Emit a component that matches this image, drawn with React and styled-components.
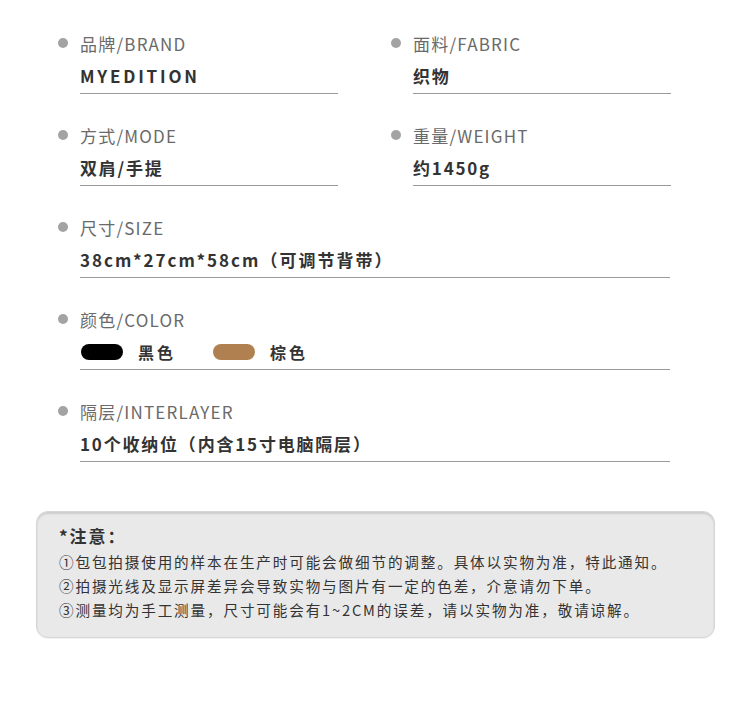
import React from 'react'
import styled, { createGlobalStyle } from 'styled-components'

const Global = createGlobalStyle`
  body {
    margin: 0;
    background: #ffffff;
    font-family: "Noto Sans CJK SC", "Noto Sans", sans-serif;
  }
`

const Page = styled.div`
  width: 750px;
  height: 705px;
  padding-top: 31px;
  box-sizing: border-box;
`

const Grid = styled.div`
  display: grid;
  grid-template-columns: 333px 333px;
  row-gap: 29px;
  padding-left: 58px;
`

const Item = styled.div`
  grid-column: ${p => (p.full ? '1 / span 2' : 'auto')};
`

const Label = styled.div`
  display: flex;
  align-items: center;
  gap: 12px;
  height: 24px;
  font-size: 17px;
  color: #6a6a6a;
  letter-spacing: 1.2px;
`

const Dot = styled.span`
  width: 10px;
  height: 10px;
  border-radius: 50%;
  background: #a3a3a3;
`

const Value = styled.div`
  margin: 9px 0 0 22px;
  width: ${p => (p.full ? '590px' : '258px')};
  height: 24px;
  line-height: 24px;
  padding-bottom: 5px;
  border-bottom: 1px solid #9a9a9a;
  font-size: 17px;
  font-weight: 700;
  color: #333333;
  letter-spacing: ${p => p.spacing || '1.8px'};
  display: flex;
  align-items: center;
`

const Swatch = styled.span`
  width: 42px;
  height: 16px;
  border-radius: 8px;
  background: ${p => p.color};
  margin-right: 15px;
  margin-left: ${p => p.offset || '1px'};
`

const SwatchName = styled.span`
  font-size: 16px;
  letter-spacing: 3px;
`

const Notice = styled.div`
  margin: 49px 0 0 36px;
  width: 679px;
  height: 127px;
  box-sizing: border-box;
  padding: 12px 0 0 22px;
  background: #e9e9e9;
  border: 1px solid #d6d6d6;
  border-radius: 12px;
  box-shadow: inset 0 2px 2px rgba(0, 0, 0, 0.12), 0 1px 1px rgba(0, 0, 0, 0.05);
  color: #333333;
`

const NoticeTitle = styled.div`
  font-size: 17px;
  font-weight: 700;
  line-height: 24px;
  letter-spacing: 2px;
  margin-bottom: 2px;
`

const NoticeLine = styled.div`
  font-size: 14.6px;
  line-height: 24px;
  letter-spacing: 1.85px;
`

const specs = [
  { label: '品牌/BRAND', value: 'MYEDITION', spacing: '2.8px' },
  { label: '面料/FABRIC', value: '织物' },
  { label: '方式/MODE', value: '双肩/手提' },
  { label: '重量/WEIGHT', value: '约1450g' },
  { label: '尺寸/SIZE', value: '38cm*27cm*58cm（可调节背带）', full: true, spacing: '2px' }
]

const notes = [
  '①包包拍摄使用的样本在生产时可能会做细节的调整。具体以实物为准，特此通知。',
  '②拍摄光线及显示屏差异会导致实物与图片有一定的色差，介意请勿下单。',
  '③测量均为手工测量，尺寸可能会有1~2CM的误差，请以实物为准，敬请谅解。'
]

export default function App() {
  return (
    <Page>
      <Global />
      <Grid>
        {specs.map(s => (
          <Item key={s.label} full={s.full}>
            <Label><Dot />{s.label}</Label>
            <Value full={s.full} spacing={s.spacing}>{s.value}</Value>
          </Item>
        ))}
        <Item full>
          <Label><Dot />颜色/COLOR</Label>
          <Value full>
            <Swatch color="#000000" />
            <SwatchName>黑色</SwatchName>
            <Swatch color="#b08050" offset="37px" />
            <SwatchName>棕色</SwatchName>
          </Value>
        </Item>
        <Item full>
          <Label><Dot />隔层/INTERLAYER</Label>
          <Value full>10个收纳位（内含15寸电脑隔层）</Value>
        </Item>
      </Grid>
      <Notice>
        <NoticeTitle>*注意：</NoticeTitle>
        {notes.map(n => (
          <NoticeLine key={n}>{n}</NoticeLine>
        ))}
      </Notice>
    </Page>
  )
}
